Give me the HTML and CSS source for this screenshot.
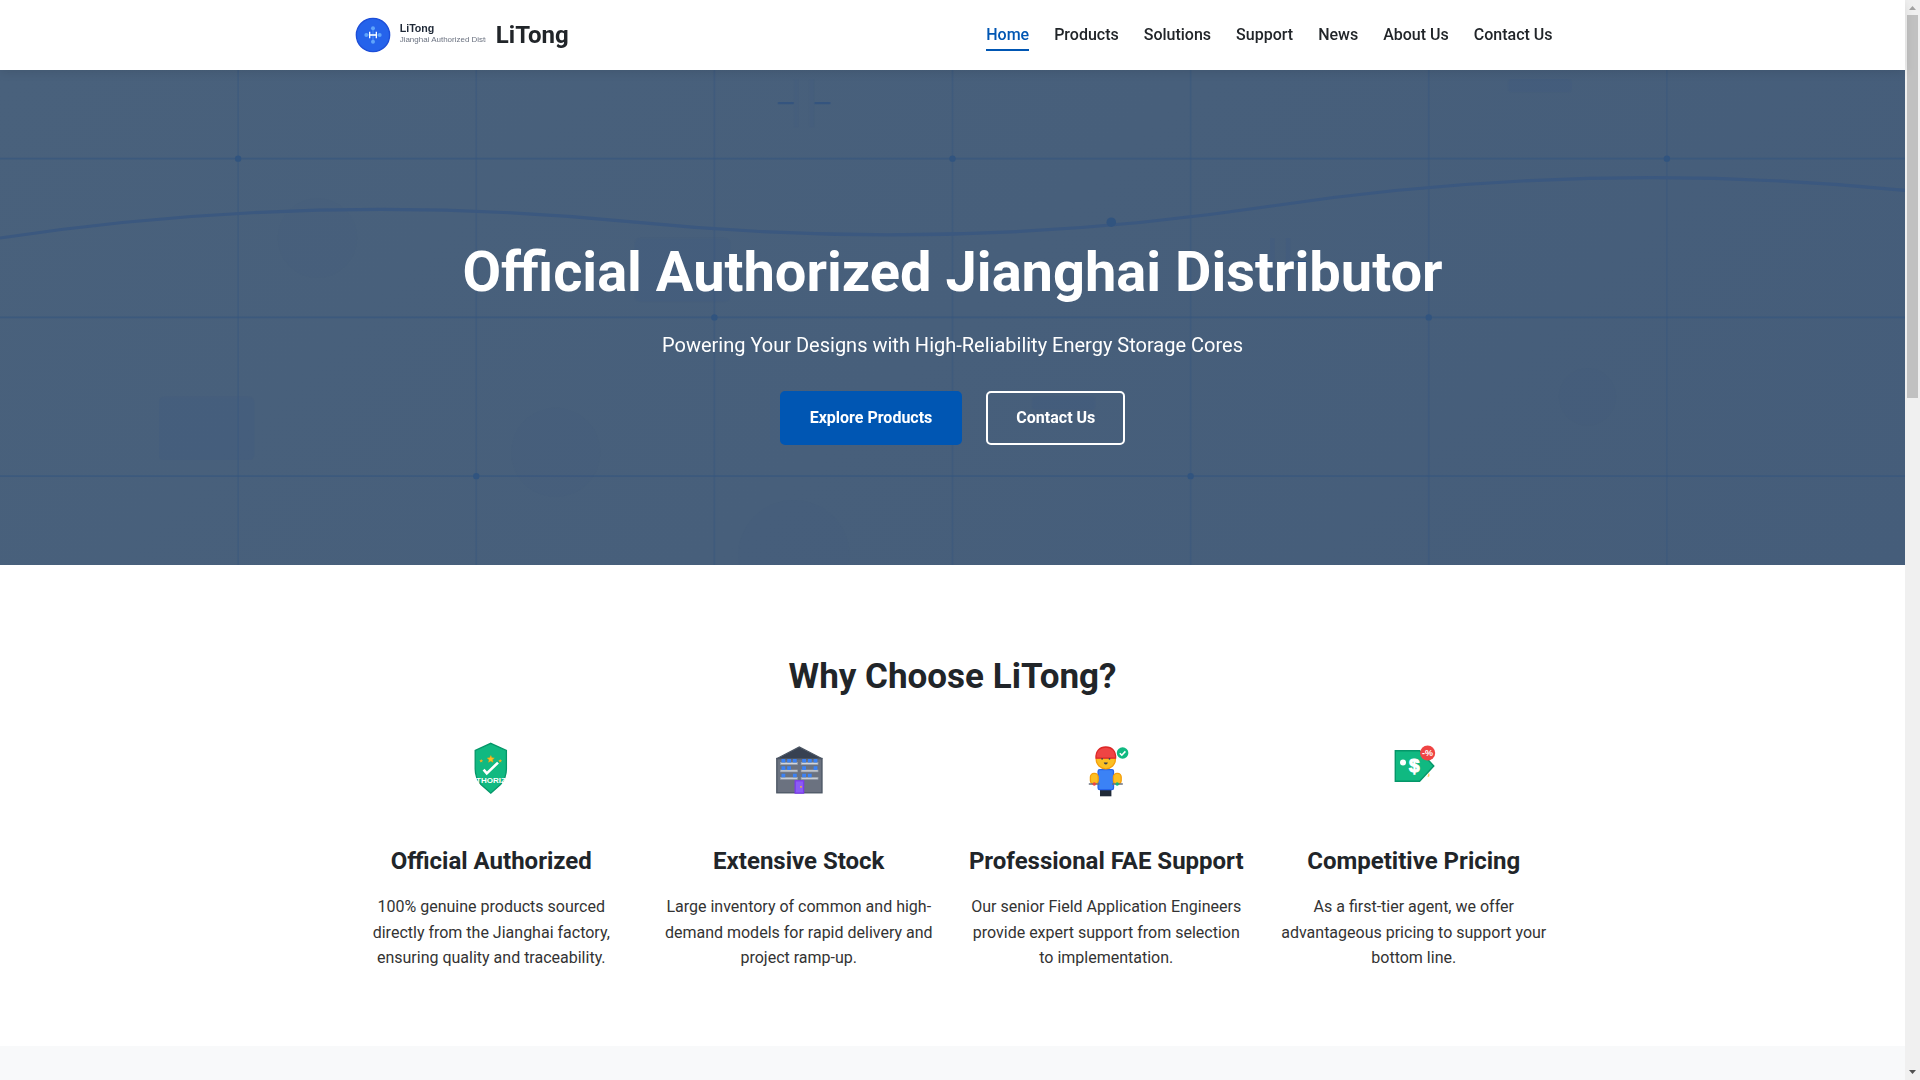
FILE: index.html
```html
<!DOCTYPE html>
<html lang="en">
<head>
    <meta charset="UTF-8">
    <meta name="viewport" content="width=device-width, initial-scale=1.0">
    <title>LiTong - Official Authorized Jianghai Distributor</title>
    <link rel="stylesheet" href="styles.css">
</head>
<body>
    <div class="page">
        <!-- Header -->
        <header class="header">
            <div class="container header-inner">
                <a href="#" class="logo">
                    <svg class="logo-mark" viewBox="0 0 200 60" aria-hidden="true">
                        <circle cx="30" cy="30" r="25" fill="#2563eb" stroke="#1d4ed8" stroke-width="2"/>
                        <path d="M30 20v20M20 30h20" stroke="#60a5fa" stroke-width="1"/>
                        <g fill="#60a5fa">
                            <circle cx="30" cy="20" r="3"/>
                            <circle cx="30" cy="40" r="3"/>
                            <circle cx="20" cy="30" r="3"/>
                            <circle cx="40" cy="30" r="3"/>
                        </g>
                        <path d="M25 25v10M35 25v10M25 30h10" fill="none" stroke="#ffffff" stroke-width="2"/>
                        <text x="70" y="26" class="logo-name">LiTong</text>
                        <text x="70" y="41" class="logo-sub">Jianghai Authorized Distr</text>
                    </svg>
                    <span class="logo-text">LiTong</span>
                </a>
                <nav class="nav">
                    <a href="#" class="nav-link active">Home</a>
                    <a href="#products" class="nav-link">Products</a>
                    <a href="#solutions" class="nav-link">Solutions</a>
                    <a href="#support" class="nav-link">Support</a>
                    <a href="#news" class="nav-link">News</a>
                    <a href="#about" class="nav-link">About Us</a>
                    <a href="#contact" class="nav-link">Contact Us</a>
                </nav>
            </div>
        </header>

        <!-- Hero -->
        <section class="hero">
            <svg class="hero-bg" viewBox="0 0 1200 600" preserveAspectRatio="xMidYMid slice" aria-hidden="true">
                <path d="M0 200H1200M0 300H1200M0 400H1200" stroke="#35567f" opacity="0.6"/>
                <path d="M150 0V600M300 0V600M450 0V600M600 0V600M750 0V600M900 0V600M1050 0V600" stroke="#35567f" opacity="0.4"/>
                <g fill="#3f5a80" opacity="0.25">
                    <rect x="100" y="350" width="60" height="40" rx="3"/>
                    <rect x="400" y="250" width="60" height="40" rx="3"/>
                    <rect x="950" y="150" width="40" height="8" rx="2"/>
                    <rect x="650" y="350" width="40" height="8" rx="2"/>
                    <circle cx="200" cy="250" r="25" opacity="0.1"/>
                    <circle cx="350" cy="385" r="28" opacity="0.2"/>
                    <circle cx="500" cy="450" r="35" opacity="0.2"/>
                    <circle cx="1000" cy="350" r="18" opacity="0.1"/>
                </g>
                <!-- Capacitor symbols -->
                <g transform="translate(500 150)">
                    <path d="M0 0h3v30H0zM10 0h3v30h-3z" fill="#3f5a80" opacity="0.2"/>
                    <path d="M-10 15H0M13 15h10" stroke="#2c4f80" stroke-width="1"/>
                </g>
                <g transform="translate(800 250)">
                    <path d="M0 0h3v30H0zM10 0h3v30h-3z" fill="#3f5a80" opacity="0.3"/>
                    <path d="M-10 15H0M13 15h10" stroke="#2c4f80" stroke-width="1"/>
                </g>
                <path d="M0 250Q200 220 400 240T800 230T1200 220" fill="none" stroke="#3b587f" stroke-width="2"/>
                <g fill="#31547f">
                    <circle cx="150" cy="200" r="2"/>
                    <circle cx="600" cy="200" r="2"/>
                    <circle cx="1050" cy="200" r="2"/>
                    <circle cx="450" cy="300" r="2"/>
                    <circle cx="900" cy="300" r="2"/>
                    <circle cx="300" cy="400" r="2"/>
                    <circle cx="750" cy="400" r="2"/>
                    <circle cx="700" cy="240" r="3"/>
                </g>
            </svg>
            <div class="container hero-content">
                <h1>Official Authorized Jianghai Distributor</h1>
                <p>Powering Your Designs with High-Reliability Energy Storage Cores</p>
                <div class="hero-buttons">
                    <a href="#products" class="btn btn-primary">Explore Products</a>
                    <a href="#contact" class="btn btn-outline">Contact Us</a>
                </div>
            </div>
        </section>

        <!-- Why choose us -->
        <section class="features">
            <div class="container">
                <h2>Why Choose LiTong?</h2>
                <div class="features-grid">
                    <div class="feature">
                        <svg class="feature-icon" viewBox="0 0 64 64" aria-hidden="true">
                            <path d="M31.8 7.3L47.4 14.5V33Q47.4 42 41.5 48.5L31.8 57.2L22 48.5Q16.2 42 16.2 33V14.5Z" fill="#10b981" stroke="#059669" stroke-width="1.3"/>
                            <path d="M31.8 19.6l1 2.2 2.5.3-1.8 1.7.5 2.4-2.2-1.2-2.2 1.2.5-2.4-1.8-1.7 2.5-.3z" fill="#fbbf24" stroke="#f59e0b" stroke-width="0.5"/>
                            <path d="M22.2 23l.6 1.2 1.3.1-1 .9.3 1.3-1.2-.7-1.2.7.3-1.3-1-.9 1.3-.1zM41.2 23l.6 1.2 1.3.1-1 .9.3 1.3-1.2-.7-1.2.7.3-1.3-1-.9 1.3-.1z" fill="#f5b020"/>
                            <path d="M24.6 33.6l3.2 3.8L39 26.6" fill="none" stroke="#ffffff" stroke-width="2.6"/>
                            <text x="31.8" y="47" class="shield-text">AUTHORIZED</text>
                        </svg>
                        <h3>Official Authorized</h3>
                        <p>100% genuine products sourced directly from the Jianghai factory, ensuring quality and traceability.</p>
                    </div>
                    <div class="feature">
                        <svg class="feature-icon" viewBox="0 0 64 64" aria-hidden="true">
                            <rect x="9.8" y="22.5" width="45.2" height="34.3" fill="#6b7280" stroke="#4b5563" stroke-width="1.3"/>
                            <path d="M9.6 22.7L32.3 11L55.2 22.7Z" fill="#374151" stroke="#4b5563" stroke-width="1.2"/>
                            <g fill="#d1d5db" stroke="#9ca3af" stroke-width="0.7">
                                <rect x="13.6" y="26.6" width="16.8" height="1.8"/>
                                <rect x="34.2" y="26.6" width="16.8" height="1.8"/>
                                <rect x="13.6" y="34" width="16.8" height="1.8"/>
                                <rect x="34.2" y="34" width="16.8" height="1.8"/>
                                <rect x="13.6" y="41.4" width="16.8" height="1.8"/>
                                <rect x="34.2" y="41.4" width="16.8" height="1.8"/>
                            </g>
                            <path fill="#3b82f6" d="M14.5 23h3.8v3.6h-3.8zM20.2 23H24v3.6h-3.8zM25.9 23h3.8v3.6h-3.8zM35.2 23H39v3.6h-3.8zM40.9 23h3.8v3.6h-3.8zM46.6 23h3.8v3.6h-3.8zM14.5 30.3h3.8v3.6h-3.8zM20.2 30.3H24v3.6h-3.8zM35.2 30.3H39v3.6h-3.8zM46.6 30.3h3.8v3.6h-3.8zM14.5 37.7h3.8v3.6h-3.8zM25.9 37.7h3.8v3.6h-3.8zM35.2 37.7H39v3.6h-3.8zM40.9 37.7h3.8v3.6h-3.8z"/>
                            <rect x="28.2" y="44.8" width="8.4" height="12.3" fill="#8b5cf6" stroke="#7c3aed" stroke-width="1.3"/>
                            <circle cx="34" cy="50.8" r="0.9" fill="#fbbf24"/>
                        </svg>
                        <h3>Extensive Stock</h3>
                        <p>Large inventory of common and high-demand models for rapid delivery and project ramp-up.</p>
                    </div>
                    <div class="feature">
                        <svg class="feature-icon" viewBox="0 0 64 64" aria-hidden="true">
                            <rect x="26" y="52.5" width="11.4" height="7.8" fill="#1f2937"/>
                            <rect x="24.1" y="33.6" width="15.4" height="20" rx="1.6" fill="#3b82f6" stroke="#2563eb" stroke-width="1.3"/>
                            <circle cx="31.8" cy="23.2" r="9.6" fill="#fbbf24" stroke="#f59e0b" stroke-width="1.3"/>
                            <path d="M22 22.2C21.6 15 25.6 11 31.8 11S42 15 41.6 22.2Z" fill="#ef4444" stroke="#dc2626" stroke-width="1.3"/>
                            <circle cx="28.1" cy="22.8" r="0.9" fill="#374151"/>
                            <circle cx="35.5" cy="22.8" r="0.9" fill="#374151"/>
                            <path d="M29.8 26.4h4q-.3 2-2 2t-2-2z" fill="#374151"/>
                            <rect x="16.4" y="37.4" width="7.8" height="10.8" rx="3.6" fill="#fbbf24" stroke="#f59e0b" stroke-width="1.3"/>
                            <rect x="39.4" y="37.4" width="7.8" height="10.8" rx="3.6" fill="#fbbf24" stroke="#f59e0b" stroke-width="1.3"/>
                            <path d="M14.8 48h10.6M38 48h10.8" stroke="#6b7280" stroke-width="1.5"/>
                            <circle cx="20.3" cy="48" r="1.7" fill="#ef4444"/>
                            <circle cx="43.2" cy="48" r="1.7" fill="#10b981"/>
                            <circle cx="48.6" cy="17" r="5.8" fill="#10b981"/>
                            <path d="M45.8 17.2l2 2 3.6-3.8" fill="none" stroke="#ffffff" stroke-width="1.6"/>
                        </svg>
                        <h3>Professional FAE Support</h3>
                        <p>Our senior Field Application Engineers provide expert support from selection to implementation.</p>
                    </div>
                    <div class="feature">
                        <svg class="feature-icon" viewBox="0 0 64 64" aria-hidden="true">
                            <path d="M13.3 14.7H37.6L51.8 30L37.6 45.3H13.3Z" fill="#10b981" stroke="#059669" stroke-width="1.4"/>
                            <circle cx="21" cy="26.4" r="3" fill="#ffffff"/>
                            <text x="32.2" y="36" class="tag-dollar">$</text>
                            <path d="M46.8 37.6v2.6h-1.2" fill="none" stroke="#fbbf24" stroke-width="0.9"/>
                            <circle cx="45.6" cy="17" r="7.6" fill="#ef4444"/>
                            <text x="45.6" y="20.4" class="tag-percent">-%</text>
                        </svg>
                        <h3>Competitive Pricing</h3>
                        <p>As a first-tier agent, we offer advantageous pricing to support your bottom line.</p>
                    </div>
                </div>
            </div>
        </section>

        <section class="products" id="products"></section>
    </div>

    <!-- Scrollbar -->
    <div class="scrollbar" aria-hidden="true">
        <svg class="scrollbar-arrow" viewBox="0 0 15 15"><path d="M4 10L7.5 6L11 10Z" fill="#a3a3a3"/></svg>
        <div class="scrollbar-track">
            <div class="scrollbar-thumb"></div>
        </div>
        <svg class="scrollbar-arrow" viewBox="0 0 15 15"><path d="M4 5L7.5 9L11 5Z" fill="#505050"/></svg>
    </div>
</body>
</html>
```
FILE: styles.css
```css
:root {
    --primary-color: #0056b3;
    --text-color: #212529;
    --light-bg: #f8f9fa;
}

* {
    margin: 0;
    padding: 0;
    box-sizing: border-box;
}

body {
    display: flex;
    height: 100vh;
    overflow: hidden;
    font-family: Roboto, sans-serif;
    font-size: 16px;
    line-height: 1.6;
    color: var(--text-color);
    background-color: #ffffff;
}

a {
    text-decoration: none;
}

.page {
    display: flex;
    flex-direction: column;
    flex: 1;
    min-width: 0;
}

.container {
    width: 100%;
    max-width: 1200px;
    margin: 0 auto;
}

/* Header */
.header {
    position: sticky;
    top: 0;
    z-index: 10;
    background-color: #ffffff;
    box-shadow: 0 2px 10px rgba(0, 0, 0, 0.1);
}

.header-inner {
    display: flex;
    justify-content: space-between;
    align-items: center;
    height: 70px;
}

.logo {
    display: flex;
    align-items: center;
    gap: 10px;
    color: var(--text-color);
}

.logo-mark {
    height: 40px;
    overflow: hidden;
}

.logo-name {
    font-family: "Liberation Sans", Arial, sans-serif;
    font-size: 16px;
    font-weight: bold;
    fill: #1f2937;
}

.logo-sub {
    font-family: "Liberation Sans", Arial, sans-serif;
    font-size: 12px;
    fill: #6b7280;
}

.logo-text {
    font-size: 24px;
    font-weight: 700;
}

.nav {
    display: flex;
    gap: 25px;
}

.nav-link {
    padding: 1px 0;
    border-bottom: 2px solid transparent;
    border-top: 2px solid transparent;
    font-weight: 500;
    color: var(--text-color);
}

.nav-link.active,
.nav-link:hover {
    color: var(--primary-color);
    border-bottom-color: var(--primary-color);
}

/* Hero */
.hero {
    position: relative;
    padding: 169px 0 120px;
    background: linear-gradient(135deg, #49617c, #455d7a);
    color: #ffffff;
    text-align: center;
}

.hero-bg {
    position: absolute;
    inset: 0;
    width: 100%;
    height: 100%;
}

.hero-content {
    position: relative;
}

.hero h1 {
    margin-bottom: 23px;
    font-size: 56px;
    line-height: 1.2;
}

.hero p {
    margin-bottom: 30px;
    font-size: 20px;
}

.hero-buttons {
    display: flex;
    justify-content: center;
    gap: 24px;
}

.btn {
    padding: 12px 28px;
    border: 2px solid transparent;
    border-radius: 5px;
    font-weight: 700;
    color: #ffffff;
}

.btn-primary {
    background-color: var(--primary-color);
    border-color: var(--primary-color);
}

.btn-outline {
    border-color: #ffffff;
}

/* Features */
.features {
    padding: 84px 0 75px;
}

.features h2 {
    margin-bottom: 31px;
    font-size: 35px;
    text-align: center;
}

.features-grid {
    display: grid;
    grid-template-columns: repeat(4, 1fr);
    gap: 30px;
}

.feature {
    display: flex;
    flex-direction: column;
    align-items: center;
    text-align: center;
}

.feature-icon {
    width: 64px;
    height: 64px;
    margin-bottom: 42px;
}

.feature h3 {
    margin-bottom: 14px;
    font-size: 24px;
}

.feature p {
    color: #333333;
}

.shield-text,
.tag-dollar,
.tag-percent {
    font-family: "Liberation Sans", Arial, sans-serif;
    font-weight: bold;
    text-anchor: middle;
    fill: #ffffff;
}

.shield-text {
    font-size: 8px;
}

.tag-dollar {
    font-size: 19px;
    stroke: #ffffff;
    stroke-width: 1px;
}

.tag-percent {
    font-size: 9px;
}

/* Products */
.products {
    flex: 1;
    background-color: var(--light-bg);
}

/* Scrollbar */
.scrollbar {
    display: flex;
    flex-direction: column;
    width: 15px;
    background-color: #f0f0f0;
}

.scrollbar-arrow {
    width: 15px;
    height: 15px;
}

.scrollbar-track {
    flex: 1;
    padding: 0 2px;
}

.scrollbar-thumb {
    height: 383px;
    background-color: #c1c1c1;
}

@media (max-width: 900px) {
    .features-grid {
        grid-template-columns: repeat(2, 1fr);
    }

    .hero h1 {
        font-size: 36px;
    }
}
```
